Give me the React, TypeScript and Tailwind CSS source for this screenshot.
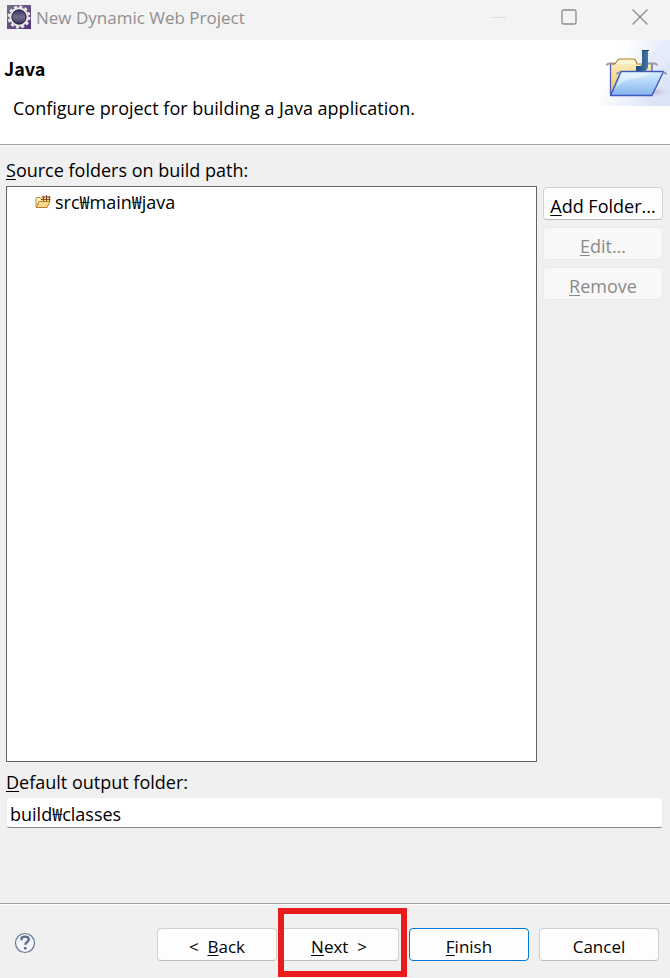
import { useState } from 'react';
import type { ReactNode } from 'react';

const FONT = 'font-["Open_Sans","Noto_Sans_CJK_KR",sans-serif]';

const buttonStyles = {
  normal: 'border-[#d0d0d0] border-b-[#bcbcbc] bg-[#fdfdfd] text-black',
  primary: 'border-[#0078d4] bg-[#fdfdfd] text-black',
  disabled: 'border-[#e8e8e8] bg-[#f8f8f8] text-[#8a8a8a]',
};

function PushButton({
  variant = 'normal',
  children,
}: {
  variant?: keyof typeof buttonStyles;
  children: ReactNode;
}) {
  return (
    <button
      type="button"
      disabled={variant === 'disabled'}
      className={`h-[33px] w-[120px] shrink-0 whitespace-pre rounded border pt-1 text-center leading-[26px] ${buttonStyles[variant]}`}
    >
      {children}
    </button>
  );
}

function Mnemonic({ children }: { children: ReactNode }) {
  return <span className="underline decoration-1 underline-offset-2">{children}</span>;
}

function AppIcon() {
  return (
    <svg viewBox="0 0 24 24" className="size-6 shrink-0" aria-hidden="true">
      <defs>
        <linearGradient id="app-bg" x1="0" y1="0" x2="1" y2="1">
          <stop offset="0" stopColor="#776b91" />
          <stop offset="1" stopColor="#50327f" />
        </linearGradient>
        <linearGradient id="app-core" x1="0" y1="0" x2="0" y2="1">
          <stop offset="0" stopColor="#2c2853" />
          <stop offset=".5" stopColor="#716b8e" />
          <stop offset="1" stopColor="#302955" />
        </linearGradient>
      </defs>
      <rect width="24" height="24" fill="url(#app-bg)" />
      <circle cx="12" cy="12" r="10.2" fill="none" stroke="#ecebe8" strokeWidth="2.6" strokeDasharray="3 2.34" />
      <circle cx="12" cy="12" r="8.6" fill="url(#app-core)" stroke="#e6e5e2" strokeWidth="2.2" />
      <circle cx="12" cy="12" r="7" fill="none" stroke="#292447" strokeWidth="1" />
    </svg>
  );
}

function BannerImage() {
  return (
    <svg viewBox="0 0 70 66" className="h-[66px] w-[70px] shrink-0" aria-hidden="true">
      <defs>
        <linearGradient id="banner-sky" x1="0" y1="0" x2="1" y2=".5">
          <stop offset=".3" stopColor="#fff" />
          <stop offset="1" stopColor="#dce4f7" />
        </linearGradient>
        <linearGradient id="folder-back" x1="0" y1="0" x2="0" y2="1">
          <stop offset="0" stopColor="#fbefc7" />
          <stop offset="1" stopColor="#efc460" />
        </linearGradient>
        <linearGradient id="folder-front" x1="0" y1="0" x2="0" y2="1">
          <stop offset="0" stopColor="#d5f2fe" />
          <stop offset="1" stopColor="#85b2ef" />
        </linearGradient>
        <linearGradient id="letter" x1="0" y1="0" x2="1" y2="0">
          <stop offset="0" stopColor="#1b4775" />
          <stop offset="1" stopColor="#4079aa" />
        </linearGradient>
        <radialGradient id="shade">
          <stop offset="0" stopColor="#b9aebf" stopOpacity=".7" />
          <stop offset="1" stopColor="#d8d8e8" stopOpacity="0" />
        </radialGradient>
      </defs>
      <rect width="70" height="66" fill="url(#banner-sky)" />
      <path d="M46 22C52 12 60 4 70 1v20C60 22 53 26 48 32z" fill="#e5ebfa" />
      <ellipse cx="56" cy="52" rx="15" ry="6" fill="url(#shade)" />
      <path d="M11 55V24h4l3-5h16l3 5h15v30z" fill="url(#folder-back)" />
      <path d="M15 24l2-3q1-2 3-2h13q2 0 3 2l1 3" fill="#fdf4d6" stroke="#ad8425" strokeWidth="1.2" />
      <path d="M10.5 55V24M52 24v8" stroke="#4b5cb4" strokeWidth="1.3" fill="none" />
      <path d="M7 25.5q0-2 3-2h5M48 23.5h6q3 0 3 2" stroke="#9999a1" strokeWidth="2" fill="none" />
      <path d="M11 24h4M37 24h10" stroke="#ae8930" fill="none" />
      <path d="M42 10h6v16q0 5-5 5H36v-5h4q2 0 2-2z" fill="url(#letter)" />
      <path d="M42 10.5h7" stroke="#173f6d" fill="none" />
      <path d="M21 31.5H63.5L52 55.5H10.5z" fill="url(#folder-front)" stroke="#3d57bd" strokeWidth="1.4" strokeLinejoin="round" />
      <path d="M22 32.5H51Q43 38 32 39T15 50z" fill="#fff" opacity=".45" />
      <path d="M17 34.500q0-2 3-2M63 32.500q3 0 3 2" stroke="#9696a4" strokeWidth="2" fill="none" />
    </svg>
  );
}

function PackageFolderIcon() {
  return (
    <svg viewBox="0 0 16 14" className="h-3.5 w-4 shrink-0" aria-hidden="true">
      <path d="M1 11.500V3.500q0-1 1-1h3l1 1.500h7V7" fill="#fff0bc" stroke="#c08c42" />
      <path d="M7 1.500h8v5H7z" fill="#f7d9a4" />
      <path d="M6.500 2h9M6 4.500h9.500M8.500 1v6M11.500 0v7M14.500 1v6" stroke="#884822" fill="none" />
      <path d="M4 6.500h11L12 12.500H1.200z" fill="#fbd98a" stroke="#b9782a" strokeLinejoin="round" />
    </svg>
  );
}

function HelpIcon() {
  return (
    <svg viewBox="0 0 22 22" className="size-[22px]" aria-hidden="true">
      <circle cx="11" cy="11" r="9.5" fill="#f4f4f6" stroke="#65779a" strokeWidth="1.2" />
      <path d="M7.6 8.2V5.7Q9 4.7 11.2 4.7c2.2 0 3.6 1 3.6 2.8 0 2.4-3.5 2.8-3.5 5.3" fill="none" stroke="#53698f" strokeWidth="2.3" />
      <rect x="9.9" y="15" width="2.7" height="2.5" rx="1" fill="#53698f" />
    </svg>
  );
}

function TitleBar() {
  return (
    <header className="flex h-10 shrink-0 items-start bg-[#f3f3f3] pl-[7px] pr-[22px] pt-[5px]">
      <AppIcon />
      <h1 className="ml-[5px] flex-1 whitespace-nowrap text-[17px] leading-[26px] text-[#8f8f8f]">New Dynamic Web Project</h1>
      <div className="flex gap-[55px] text-[#8c8c8c]">
        <button type="button" aria-label="Minimize" className="flex h-6 items-center text-[#dcdcdc]">
          <svg viewBox="0 0 16 16" className="size-4" fill="none" stroke="currentColor"><path d="M1 8.5h15" /></svg>
        </button>
        <button type="button" aria-label="Maximize" className="flex h-6 items-center">
          <svg viewBox="0 0 16 16" className="size-4" fill="none" stroke="currentColor" strokeWidth="1.3"><rect x="1" y="1" width="14" height="14" rx="1.5" /></svg>
        </button>
        <button type="button" aria-label="Close" className="flex h-6 items-center">
          <svg viewBox="0 0 16 16" className="size-4" fill="none" stroke="currentColor" strokeWidth="1.3"><path d="m.5.5 15 15m0-15-15 15" /></svg>
        </button>
      </div>
    </header>
  );
}

export default function App() {
  const [output, setOutput] = useState('build₩classes');

  return (
    <div className={`flex min-h-screen flex-col bg-[#f0f0f0] text-[18px] text-black ${FONT}`}>
      <TitleBar />

      <section className="flex h-[106px] shrink-0 justify-between border-b border-white bg-white shadow-[inset_0_-1px_0_#a0a0a0]">
        <div className="pt-4">
          <h2 className='pl-1 font-["Noto_Sans_CJK_KR",sans-serif] font-bold leading-6'>Java</h2>
          <p className="pl-[13px] pt-4 leading-6">Configure project for building a Java application.</p>
        </div>
        <BannerImage />
      </section>

      <main className="flex flex-1 flex-col px-[6px] pt-3">
        <h3 id="source-folders" className="pb-1 leading-6"><Mnemonic>S</Mnemonic>ource folders on build path:</h3>
        <div className="flex flex-1 gap-[6px]">
          <ul aria-labelledby="source-folders" className="flex-1 border border-[#646464] bg-white pl-7 pt-[3px]">
            <li className="flex items-center gap-1 leading-6">
              <PackageFolderIcon />
              src₩main₩java
            </li>
          </ul>
          <div className="flex flex-col gap-[7px] pr-px pt-px">
            <PushButton><Mnemonic>A</Mnemonic>dd Folder...</PushButton>
            <PushButton variant="disabled"><Mnemonic>E</Mnemonic>dit...</PushButton>
            <PushButton variant="disabled"><Mnemonic>R</Mnemonic>emove</PushButton>
          </div>
        </div>
        <label htmlFor="output-folder" className="pt-2 leading-6"><Mnemonic>D</Mnemonic>efault output folder:</label>
        <input
          id="output-folder"
          type="text"
          value={output}
          onChange={(e) => setOutput(e.target.value)}
          className="mr-px mt-[3px] h-[31px] rounded-sm border border-[#ececec] border-b-[#868686] bg-white px-[3px] pt-px outline-none"
        />
      </main>

      <footer className="mt-[75px] flex h-[75px] shrink-0 items-start border-t border-[#a0a0a0] pl-[14px] pr-[11px] pt-6 text-[17px] shadow-[inset_0_1px_0_#fff]">
        <button type="button" aria-label="Help" className="mt-1">
          <HelpIcon />
        </button>
        <div className="ml-auto flex gap-[10px]">
          <div className="flex gap-[2px]">
            <PushButton>{'<  '}<Mnemonic>B</Mnemonic>ack</PushButton>
            <div className="relative">
              <PushButton><Mnemonic>N</Mnemonic>{'ext  >'}</PushButton>
              <div className="pointer-events-none absolute -left-px -right-2 -top-5 h-[69px] border-6 border-[#e81c1c]" />
            </div>
          </div>
          <PushButton variant="primary"><Mnemonic>F</Mnemonic>inish</PushButton>
          <PushButton>Cancel</PushButton>
        </div>
      </footer>
    </div>
  );
}
